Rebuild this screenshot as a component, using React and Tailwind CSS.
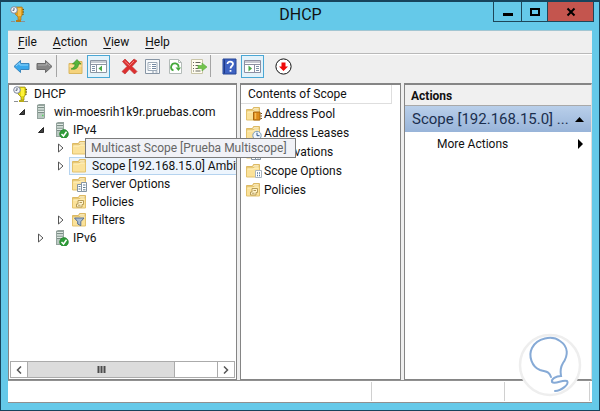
import React, { useState } from 'react';

const Folder = ({ children }) => (
  <svg width="18" height="16" viewBox="0 0 18 16" className="shrink-0" aria-hidden="true">
    <path d="M1.500 3.500h6l1-2h6v12h-13z" fill="#f0d07a" stroke="#dcb964" />
    <path d="M9 2.500h4.500v2H8z" fill="#fffbe8" />
    <path d="M1.500 5h6.500l1-1h5.500v10h-13z" fill="#fbe29a" stroke="#e3c26c" />
    <path d="M2.500 6h6l1-1h4" stroke="#fff3c4" fill="none" />
    {children}
  </svg>
);

const ServerIcon = ({ ok }) => (
  <svg width="15" height="17" viewBox="0 0 15 17" className="shrink-0" aria-hidden="true">
    <path d="M1 1l2-1h6v14l-1 1H1z" fill="#94a39d" />
    <path d="M2 2h6v12H2z" fill="#b9c8c1" />
    <path d="M2 3.500h6M2 6h6M2 8.500h6" stroke="#7b8d86" />
    <path d="M2 2.500h6M2 5h6M2 7.500h6" stroke="#dfe8e3" />
    <path d="M6 11.500h1.500" stroke="#58d05e" strokeWidth="1.500" />
    {ok && (
      <>
        <circle cx="9" cy="12" r="4.400" fill="#2e9b37" stroke="#1c7a28" strokeWidth=".6" />
        <path d="M6.500 12l2 2L11.500 9.700" stroke="#fff" strokeWidth="1.500" fill="none" />
      </>
    )}
  </svg>
);

const DhcpIcon = ({ gold }) => (
  <svg width="16" height="17" viewBox="0 0 16 17" className="shrink-0" aria-hidden="true">
    <path d="M5.500 1H12l1 2v5l-2 3v3H8v-3L5 8V4z" fill={gold ? '#dfa01f' : '#e3da12'} stroke={gold ? '#a8752a' : '#8a7d1a'} strokeWidth=".7" />
    <path d="M9.500 2v8" stroke={gold ? '#f2bd4f' : '#fff23c'} strokeWidth="3" />
    <path d="M12.500 3.500h1.500M12.500 6h1.500M12.500 8.500h1" stroke="#6b5510" />
    <path d="M1 15.500h4M11 15.500h4" stroke="#8b8f94" />
    <path d="M6 15h5" stroke={gold ? '#b57c19' : '#b8aa18'} strokeWidth="2" />
    <circle cx="4" cy="4" r="3.300" fill="#f4f6fa" stroke="#80899b" />
    <path d="M4 2v2.300H2.500" stroke="#53607a" fill="none" />
  </svg>
);

const Badge = {
  options: (
    <g>
      <path d="M6.500 8.500h4v7h-4zM10.500 6.500h5v9h-5z" fill="#fff" stroke="#8494a3" />
      <path d="M7.500 10.500h2M7.500 13h2M12 9h2.500M12 11.500h2.500M12 13.800h2.500" stroke="#5f7f92" />
    </g>
  ),
  scopeOptions: (
    <g>
      <path d="M10.500 7.500h6v7h-6z" fill="#fff" stroke="#a9b5c1" />
      <path d="M12 10h1M14 10h1M12 12.500h1M14 12.500h1" stroke="#5b7ba0" strokeWidth="1.500" />
    </g>
  ),
  policies: (
    <g>
      <path d="M7 6.500h5.500v4H11v2.500H5.500V10H7z" fill="#fff4cd" stroke="#b79c58" />
      <path d="M8.500 8.500h2.500M7 11.200h2.500" stroke="#b29758" />
    </g>
  ),
  filters: <path d="M3.500 6h9.500L9.800 9.700v4L6.700 12V9.700z" fill="#a7bdd6" stroke="#5a6f8c" />,
  pool: (
    <g>
      <path d="M8.500 6h6.500v8H8.500z" fill="#dc8b1a" stroke="#a8660f" />
      <path d="M10.500 7v6" stroke="#f8bc53" strokeWidth="1.500" />
      <path d="M15.500 7.500h1.500M15.500 10h1.500M15.500 12.500h1.500" stroke="#76511d" />
    </g>
  ),
  leases: (
    <g>
      <circle cx="12" cy="10.500" r="4.200" fill="#f0f6fb" stroke="#7b9dbc" />
      <path d="M12 7.700v3h2.500" stroke="#305b8b" fill="none" />
    </g>
  ),
};

const Arrow = ({ open }) => (
  <svg width="8" height="10" viewBox="0 0 8 10" aria-hidden="true">
    {open ? (
      <path d="M6.500 2.500v5h-5z" fill="#404040" stroke="#262626" />
    ) : (
      <path d="M1.500 1v8L6 5z" fill="#fff" stroke="#555" />
    )}
  </svg>
);

const TreeRow = ({ label, icon, open, expandable = true, selected, wide, className, tip }) => (
  <li role="treeitem" aria-selected={!!selected} className={`relative flex h-[18px] items-center ${className}`}>
    {expandable ? (
      <button type="button" aria-label={`Toggle ${label}`} className="w-3 shrink-0">
        <Arrow open={open} />
      </button>
    ) : (
      <span className="w-3 shrink-0" />
    )}
    <span
      className={`flex h-[18px] min-w-0 flex-1 items-center overflow-hidden border border-r-0 pl-px whitespace-nowrap ${
        selected ? 'border-[#b5d3ef] bg-[#edf5fd]' : 'border-transparent'
      }`}
    >
      <span className={`shrink-0 ${wide ? 'w-[21px]' : 'w-[18px]'}`}>{icon}</span>
      {!tip && label}
    </span>
    {tip && (
      <span role="tooltip" className="absolute left-[76px] z-10 h-5 border border-[#7c7c7c] bg-[#f1f2f7] pr-2 pl-[5px] whitespace-nowrap text-[#666]">
        {label}
      </span>
    )}
  </li>
);

const Tool = ({ label, active, children }) => (
  <button
    type="button"
    aria-label={label}
    className={`flex h-[23px] w-[23px] items-center justify-center border ${
      active ? 'border-[#4aa7d4] bg-[#e3f2fa]' : 'border-transparent'
    }`}
  >
    <svg width="17" height="17" viewBox="0 0 17 17" className="shrink-0" aria-hidden="true">
      {children}
    </svg>
  </button>
);

const Gap = ({ line }) => <span className={`h-[22px] w-2 border-l ${line ? 'border-[#a5a5a5]' : 'border-transparent'}`} />;

const Toolbar = () => (
  <div role="toolbar" className="flex h-[29px] items-start border-t border-white pl-0.5">
    <Tool label="Back">
      <path d="M1 8.500L7.500 2.500v3H16v6H7.500v3z" fill="#39a8ec" stroke="#3b86bd" />
      <path d="M3 8L6.800 4.800V7H15" stroke="#8fd5fb" fill="none" />
    </Tool>
    <Tool label="Forward">
      <path d="M16 8.500L9.500 2.500v3H1v6h8.500v3z" fill="#858585" stroke="#6a6a6a" />
      <path d="M2 7h8.500V5L14 8" stroke="#adadad" fill="none" />
    </Tool>
    <Gap line />
    <Tool label="Up one level">
      <path d="M2 5.500h6l1-2h6v12H2z" fill="#f5d37c" stroke="#d9b65f" />
      <path d="M2.500 8h12" stroke="#ffedb6" />
      <path d="M4 11c3-1 4-3 4-5H5.500L10 1.500 14 6h-2.500c0 4-3 6-7.500 5z" fill="#56b43b" stroke="#2f8a22" strokeWidth=".6" />
    </Tool>
    <Tool label="Show console tree" active>
      <path d="M.5 2.500h16v12H.5z" fill="#fff" stroke="#8d96a3" />
      <path d="M1 4h15M1 6.500h15" stroke="#8d96a3" />
      <path d="M6.500 7v7" stroke="#8d96a3" />
      <path d="M2 8.500h3M2 10.500h3M2 12.500h3" stroke="#7c8fa6" />
      <path d="M12 7.500v6l-3.500-3z" fill="#4aa845" />
    </Tool>
    <Gap />
    <Tool label="Delete">
      <path d="M1.500 3.500L4 1l4.500 4.500L13 1l3 2-5 5.500 5 5-2.500 2.500-5-5L4 16l-3-2.500 5-5z" fill="#dc2f2f" stroke="#c23a3a" strokeWidth=".7" />
      <path d="M3.500 3l5 4.500L13 3" stroke="#f38380" fill="none" />
    </Tool>
    <Tool label="Properties">
      <path d="M1.500 1.500h14v14h-14z" fill="#f8fafc" stroke="#8795a4" />
      <path d="M4 4.500h9v8H4z" fill="#fff" stroke="#9caab8" />
      <path d="M5.500 6.500h1M8 6.500h4M5.500 8.500h1M8 8.500h4M5.500 10.500h1M8 10.500h4" stroke="#7288a0" />
      <path d="M8 14h2M11.500 14h2" stroke="#8795a4" />
    </Tool>
    <Tool label="Refresh">
      <path d="M2.500 1.500h9l3 3v11h-12z" fill="#fff" stroke="#b3bbb8" />
      <path d="M11.500 1.500v3h3" fill="none" stroke="#b3bbb8" />
      <path d="M6.500 12.500A3.700 3.700 0 1 1 11.500 9.500" fill="none" stroke="#45a83c" strokeWidth="1.800" />
      <path d="M8.500 9.500h5.500l-2.500 3.500z" fill="#45a83c" />
    </Tool>
    <Tool label="Export list">
      <path d="M1.500 1.500h11v14h-11z" fill="#fffdf0" stroke="#c9c5a8" />
      <path d="M3 4.500h1M3 7.500h1M3 10.500h1M3 13h1M5.500 4.500h5M5.500 7.500h3M5.500 10.500h3M5.500 13h5" stroke="#66665e" />
      <path d="M8 7.500h4V5l5 4-5 4v-2.500H8z" fill="#72c34d" stroke="#5cab42" strokeWidth=".6" />
    </Tool>
    <Gap line />
    <Tool label="Help">
      <path d="M2 1h13v15H2z" fill="#3e62c2" stroke="#274696" />
      <path d="M3.500 1.500v14" stroke="#1f3a88" />
      <path d="M6.500 6c0-3.500 5.500-3 5.500 0 0 2-2.500 2-2.500 4.500M9.500 12v1.800" fill="none" stroke="#fff" strokeWidth="1.800" />
    </Tool>
    <Tool label="Show action pane" active>
      <path d="M.5 2.500h16v12H.5z" fill="#fff" stroke="#8d8fa3" />
      <path d="M1 4h15M1 6.500h15" stroke="#8d8fa3" />
      <path d="M10.500 7v7" stroke="#8d8fa3" />
      <path d="M12 8.500h3M12 10.500h3M12 12.500h3" stroke="#7c8fa6" />
      <path d="M4.500 7.500v6l3.500-3z" fill="#4aa845" />
    </Tool>
    <Gap />
    <Tool label="Stop service">
      <circle cx="8.500" cy="8.500" r="7.600" fill="#fff" stroke="#111" />
      <path d="M6.500 4.500h4v4H13L8.500 13 4 8.500h2.500z" fill="#f00a0a" />
    </Tool>
  </div>
);

const listItems = [
  { name: 'Address Pool', badge: 'pool' },
  { name: 'Address Leases', badge: 'leases' },
  { name: 'Reservations', badge: 'options' },
  { name: 'Scope Options', badge: 'scopeOptions' },
  { name: 'Policies', badge: 'policies' },
];

const menus = ['File', 'Action', 'View', 'Help'];

const App = () => {
  const [selected, setSelected] = useState(null);

  return (
    <div className="relative flex min-h-screen flex-col border border-t-2 border-[#17445c] bg-[#65c9e9] px-[7px] pb-[7px] font-['Roboto','Open_Sans',sans-serif] text-[12px] leading-[18px] text-[#111]">
      <header className="flex h-7 items-start">
        <div className="flex w-[100px] items-center pt-1 pl-0.5">
          <DhcpIcon gold />
        </div>
        <h1 className="flex-1 pt-0.5 text-center text-[16px] leading-[22px]">DHCP</h1>
        <div className="-mr-0.5 flex h-5 border border-t-0 border-[#1e4659]">
          <button type="button" aria-label="Minimize" className="flex w-[27px] items-center justify-center">
            <svg width="10" height="10"><path d="M0 6h10v3H0z" fill="#000" /></svg>
          </button>
          <button type="button" aria-label="Maximize" className="flex w-[26px] items-center justify-center border-l border-[#1e4659]">
            <svg width="10" height="10"><path d="M1 2h8v6H1z" fill="none" stroke="#000" strokeWidth="2" /></svg>
          </button>
          <button type="button" aria-label="Close" className="flex w-[46px] items-center justify-center border-l border-[#1e4659] bg-[#c4554e]">
            <svg width="10" height="10"><path d="M1.500 1.500l7 7M8.500 1.500l-7 7" stroke="#000" strokeWidth="2" /></svg>
          </button>
        </div>
      </header>

      <main className="flex flex-1 flex-col border-t border-[#a3c6d2] bg-[#efefef]">
        <nav className="flex h-[23px] items-center gap-4 border-b border-[#b9b9b9] pl-2.5">
          {menus.map((menu) => (
            <button key={menu} type="button">
              <u className="underline-offset-2">{menu[0]}</u>
              {menu.slice(1)}
            </button>
          ))}
        </nav>
        <Toolbar />

        <div className="grid flex-1 grid-cols-[229fr_161fr_188fr] gap-[3px]">
          <section className="flex min-w-0 flex-col border border-t-2 border-[#858585] bg-white">
            <ul role="tree" className="flex-1">
              <li role="treeitem" className="flex h-[18px] items-center gap-1 pl-1">
                <DhcpIcon />
                <span className="pl-px">DHCP</span>
              </li>
              <TreeRow label="win-moesrih1k9r.pruebas.com" icon={<ServerIcon />} open className="pl-[9px] [&>span]:pl-[5px]" />
              <TreeRow label="IPv4" icon={<ServerIcon ok />} open className="pl-7 [&>span]:pl-[5px]" />
              <TreeRow label="Multicast Scope [Prueba Multiscope]" icon={<Folder />} wide tip className="pl-12" />
              <TreeRow label="Scope [192.168.15.0] Ambito" icon={<Folder />} wide selected className="pl-12" />
              <TreeRow label="Server Options" icon={<Folder>{Badge.options}</Folder>} wide expandable={false} className="pl-12" />
              <TreeRow label="Policies" icon={<Folder>{Badge.policies}</Folder>} wide expandable={false} className="pl-12" />
              <TreeRow label="Filters" icon={<Folder>{Badge.filters}</Folder>} wide className="pl-12" />
              <TreeRow label="IPv6" icon={<ServerIcon ok />} className="pl-7 [&>span]:pl-[5px]" />
            </ul>
            <div className="mx-px mb-px flex h-[17px] border border-[#ababab]">
              <button type="button" aria-label="Scroll left" className="flex w-4 items-center justify-center">
                <svg width="6" height="8"><path d="M5 0.500L1.500 4 5 7.500" fill="none" stroke="#555" strokeWidth="1.500" /></svg>
              </button>
              <div className="flex flex-1">
                <div className="flex w-[78%] items-center justify-center border-x border-[#ababab] bg-[#dcdcdc]">
                  <svg width="9" height="7"><path d="M1.500 0v7M4.500 0v7M7.500 0v7" stroke="#4c4c4c" strokeWidth="2" /></svg>
                </div>
              </div>
              <button type="button" aria-label="Scroll right" className="flex w-[17px] items-center justify-center border-l border-[#ababab]">
                <svg width="6" height="8"><path d="M1 0.500L4.500 4 1 7.500" fill="none" stroke="#555" strokeWidth="1.500" /></svg>
              </button>
            </div>
          </section>

          <section className="min-w-0 border border-t-2 border-[#858585] bg-white">
            <h2 className="mr-2 h-[19px] border-r border-b border-[#dedede] pl-[7px] whitespace-nowrap">Contents of Scope</h2>
            <ul>
              {listItems.map((item) => (
                <li key={item.name}>
                  <button
                    type="button"
                    onClick={() => setSelected(item.name)}
                    className={`flex h-[19px] w-full items-center pl-1 whitespace-nowrap ${selected === item.name ? 'bg-[#edf5fd]' : ''}`}
                  >
                    <Folder>{Badge[item.badge]}</Folder>
                    <span className="pl-px">{item.name}</span>
                  </button>
                </li>
              ))}
            </ul>
          </section>

          <section className="min-w-0 border border-t-2 border-[#858585] border-r-[#dedede] bg-white">
            <h2 className="h-[21px] border-b border-[#a9a9a9] bg-[#f0f0f0] pl-1.5 leading-[22px] font-bold">Actions</h2>
            <button type="button" className="flex h-[26px] w-full items-center justify-between bg-linear-to-b from-[#b9cfea] to-[#98b4d9] pr-[7px] pl-[7px] text-[15px] text-[#1b2f4e]">
              <span className="whitespace-nowrap">Scope [192.168.15.0] ...</span>
              <svg width="9" height="5"><path d="M0 5L4.500 0 9 5z" fill="#000" /></svg>
            </button>
            <button type="button" className="flex h-6 w-full items-center justify-between pr-2 pl-8">
              More Actions
              <svg width="5" height="10"><path d="M0 0l5 5-5 5z" fill="#000" /></svg>
            </button>
          </section>
        </div>

        <footer className="flex h-[23px] border-t border-b border-[#909090] bg-white">
          <span className="flex-1" />
          <span className="my-px w-[133px] border-l border-[#d0d0d0]" />
          <span className="my-px mr-0.5 w-[86px] border-x border-[#d0d0d0]" />
        </footer>
      </main>

      <svg width="66" height="66" viewBox="0 0 66 66" className="absolute right-4 bottom-3 z-20" aria-hidden="true">
        <circle cx="33" cy="33" r="30" fill="#fff" stroke="#eeeeee" strokeWidth="2.500" />
        <path
          d="M34 45C32 39 29 40 23 38C15 35 11 24 15 16C20 6 35 3 43 9C52 15 51 24 46 31C43 36 43 39 44 44C39 44 34 47 35 50C38 53 46 47 50 49C53 52 44 59 38 59"
          fill="none"
          stroke="#86aad6"
          strokeWidth="2"
          strokeLinecap="round"
        />
      </svg>
    </div>
  );
};

export default App;
